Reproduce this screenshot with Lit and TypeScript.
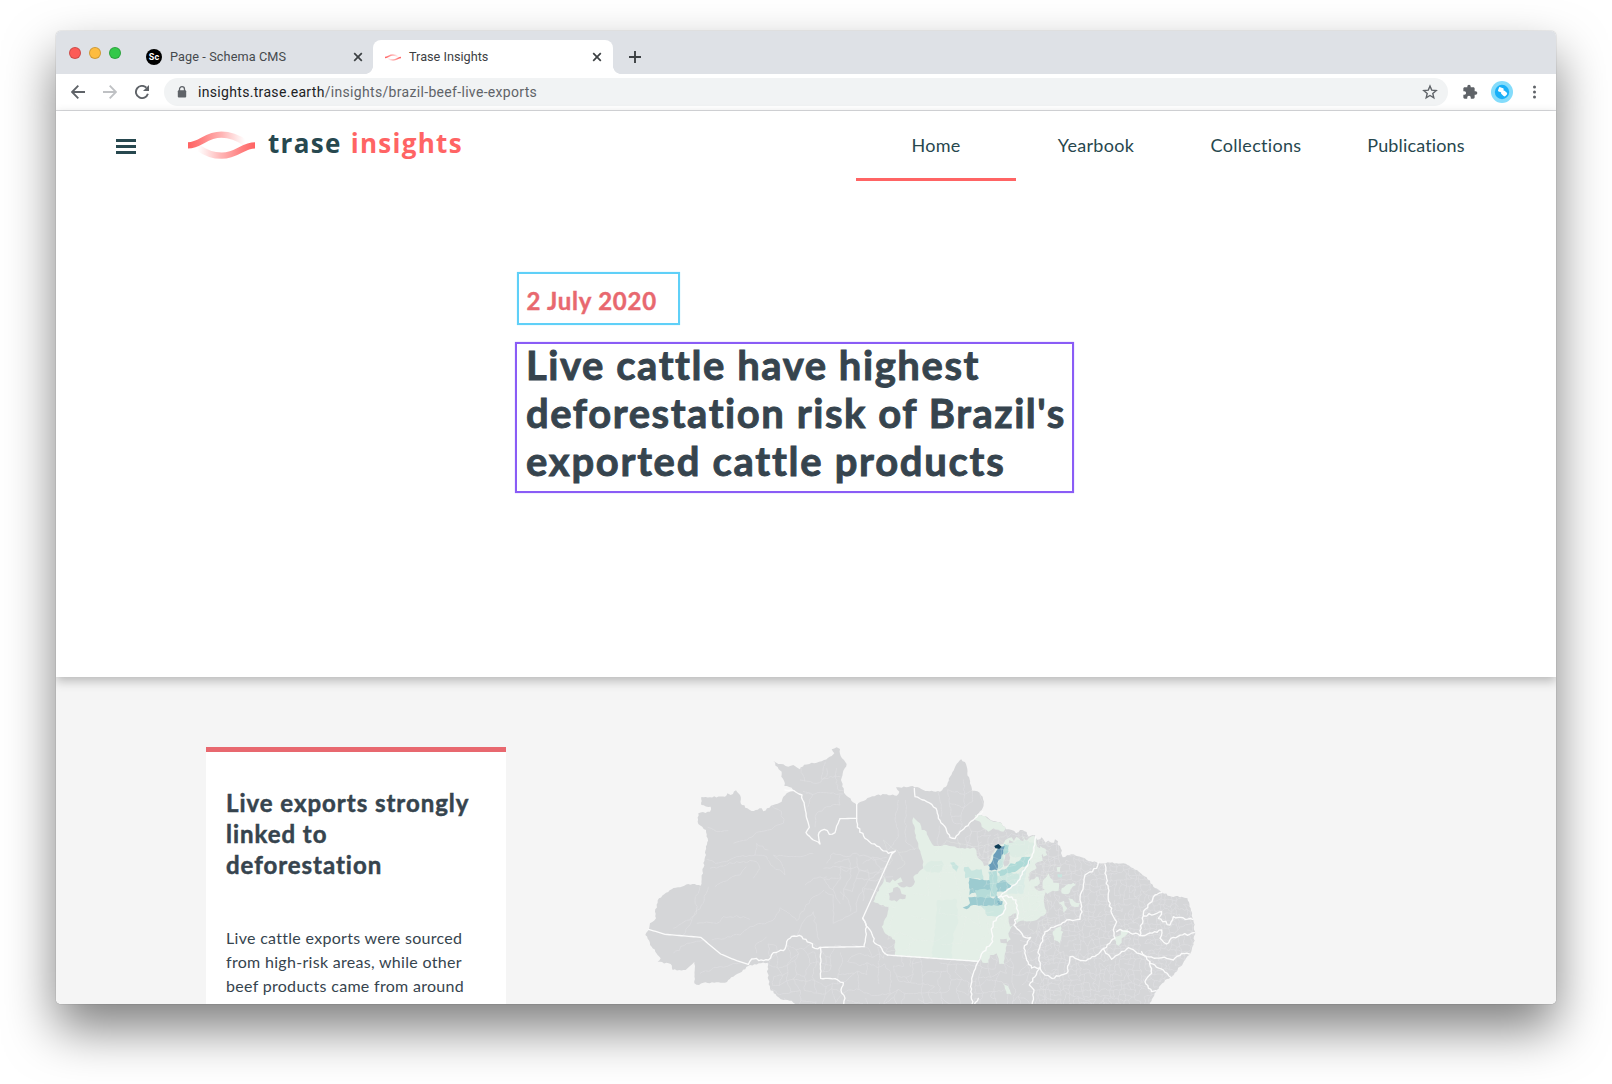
import { LitElement, html, svg, css } from "lit";
import { customElement } from "lit/decorators.js";

/* ---------- map geometry ---------- */

// Small deterministic generator so that coastlines are always the same.
function rng(seed: number) {
  let s = seed;
  return () => {
    s = (s * 1664525 + 1013904223) % 4294967296;
    return s / 4294967296;
  };
}

function parse(src: string, dx = 0): number[][] {
  return src.trim().split(/\s+/).map((p) => {
    const [x, y] = p.split(",").map(Number);
    return [x + dx, y];
  });
}

// Breaks each long segment into short ones with a small sideways offset.
function rough(pts: number[][], amp: number, step = 9, seed = 7): string {
  const r = rng(seed + Math.round(pts[0][0]));
  const out: string[] = [];
  pts.forEach((p, i) => {
    out.push(`${p[0]} ${p[1]}`);
    const q = pts[i + 1];
    if (!q) return;
    const dx = q[0] - p[0];
    const dy = q[1] - p[1];
    const len = Math.hypot(dx, dy);
    const n = Math.floor(len / step);
    for (let k = 1; k < n; k++) {
      const o = (r() - 0.5) * 2 * amp;
      out.push(
        `${(p[0] + (dx * k) / n - (dy / len) * o).toFixed(1)} ${(p[1] + (dy * k) / n + (dx / len) * o).toFixed(1)}`
      );
    }
  });
  return "M" + out.join("L");
}

const MID = 660;
const EAST = 1080;

const LAND = [
  ...parse(`16,585 26,570 30,550 48,535 45,515 57,475 95,448 145,432 170,435 182,437`),
  ...parse(`203,295 198,270 175,252 175,220 210,215 212,200 184,195 184,171 255,170 262,160 272,165 288,151
    300,165 302,190 322,205 335,213 365,205 370,214 400,195 425,185 430,170 440,160 465,152 455,143 433,138
    432,122 424,110 425,95 416,88 400,63 415,72 430,73 445,80 460,75 480,88 492,74 515,68 530,68 552,60 575,48 583,40 575,28 590,22 600,27 602,48 612,60 620,72
    610,92 603,120 612,158 645,190 650,195 670,183 690,172 710,165 740,163 770,167 778,155 768,142 785,143 818,138 850,150`),
  ...parse(`190,150 215,152 240,155 258,140 270,110 284,84 300,60 304,58 318,72 322,100 330,130 336,152 352,154 368,170 372,185 365,210 350,225
    375,228 400,243 425,250 438,268 455,270 468,280 480,270 500,276 506,290 525,286 533,300 545,292 556,308 565,302 582,308 585,298 594,304 594,316 600,318`, MID),
  ...parse(`182,325 188,352 215,343 240,350 260,360 295,370 330,368 370,370 400,385 440,412 460,440 487,458 515,470 545,470 562,475 572,505
    580,540 585,575 580,615 568,645 540,680 512,712 495,720 470,750 445,800`, EAST),
  ...parse(`470,800 455,782 430,780 410,768 390,745 383,700 383,668 330,675 300,698 280,710 255,728 190,728 177,735 163,730 163,665
    150,678 137,690 98,690 92,672 53,665 62,655 35,620 16,585`),
];

const BORDERS: [string, number, number][] = [
  ["26,568 75,583 182,592 242,642 290,662 325,673", 0, 0],
  ["325,673 335,657 385,660 400,638 430,632 440,605 455,589 485,589 510,608 525,625 540,622", 0, 3],
  ["540,622 672,620", 0, 0],
  ["672,620 680,560 668,535", 0, 2],
  ["668,535 755,342", 0, 0],
  ["755,342 766,333 745,340 710,318 675,295 652,262 650,235", 0, 3],
  ["650,235 650,190", 0, 0],
  ["648,235 600,236", 0, 0],
  ["600,236 590,258 585,278 568,283 562,272 553,268 543,272 535,285 537,300 540,312 520,300 498,278 508,262 500,235 495,205 488,180 486,165 462,152 435,150", 0, 2],
  ["542,622 542,715 585,716", 0, 1],
  ["585,716 610,728 603,750 615,775 606,800", 0, 2],
  ["668,535 690,570 705,610 725,625 742,645", 0, 2.5],
  ["742,645 1015,664", 0, 0],
  ["163,145 165,170 200,185 228,205 235,235 258,265 270,292 285,296 300,275 345,235 368,215", MID, 2],
  ["527,290 522,330 505,370 470,430 415,472", MID, 2],
  ["427,470 440,490 430,520 400,545 395,575 398,605 370,635 355,664 340,700 332,740 338,800", MID, 2.5],
  ["338,800 355,775", MID, 2],
  ["420,470 440,466 468,480 475,520 462,555 490,590 512,592 492,625 500,660 515,684 540,684", MID, 3],
  ["120,684 88,735 102,750 97,800", EAST, 2.5],
  ["120,684 116,630 135,575 200,540 240,538 245,500 240,480 250,440 255,405 290,385 295,367", EAST, 3],
  ["120,684 130,700 155,715 200,700 210,650 250,662 290,645 345,595 340,570 350,545 335,520 325,460 315,400 315,373", EAST, 3],
  ["350,575 360,568 385,575 420,587 430,520 465,465 485,458", EAST, 3],
  ["432,528 485,515 475,535 510,555 520,530 578,538", EAST, 3],
  ["420,587 485,570 480,595 500,612 520,592 583,578", EAST, 3],
  ["310,625 335,658 385,623 440,650 500,655 520,660 545,640 568,642", EAST, 2.5],
  ["425,635 450,670 490,690 512,712", EAST, 2],
  ["450,665 455,700 435,725 455,755 468,752", EAST, 2.5],
];

const GREY = "#d5d6d8";
const PALE = "#e4efe7";

const AREAS: [string, string, number][] = [
  [PALE, `160,232 180,250 185,270 200,275 205,290 222,318 260,315 300,325 345,325 350,345 362,360 372,378 385,375 395,345 412,320
    430,312 436,300 455,292 462,304 470,290 484,300 490,290 500,302 512,290 527,290 532,320 560,330 545,345 548,362 525,372 530,385 508,400 512,415 535,410 540,430 522,440 535,452 560,450 552,470 558,520 530,540 475,545
    455,560 445,580 452,598 440,608 435,640 432,672 418,672 410,640 390,645 385,668 368,668 362,650 355,664 105,647 105,600 75,580 65,560 80,530 85,500
    60,495 40,485 75,412 78,425 90,428 98,418 105,424 122,412 128,425 112,430 125,442 155,440 165,425 160,410 190,385 190,365 182,340 175,320 170,300 165,265 158,250`, MID],
  [PALE, `345,225 375,225 390,240 425,250 438,265 430,275 400,265 385,275 365,260 360,245 345,240`, MID],
  [GREY, `86,460 98,456 100,444 112,440 120,446 125,462 138,465 136,476 120,476 110,485 88,480`, MID],
  [GREY, `420,598 440,596 442,610 422,608`, MID],
  [GREY, `505,410 530,400 528,412 508,425`, MID],
  [GREY, `448,300 462,306 458,318 446,312`, MID],
  [GREY, `480,298 492,294 490,306 478,308`, MID],
  [GREY, `445,530 468,520 468,555 450,560`, MID],
  [PALE, `550,420 566,400 580,428 597,430 596,452 578,452 562,462 548,445`, MID],
  [PALE, `540,318 556,326 562,345 550,350`, MID],
  ["#c8e5df", `592,402 606,402 606,412 594,412`, MID],
  [PALE, `158,575 168,565 182,558 182,572 190,575 180,610 162,600`, EAST],
  [PALE, `345,590 362,585 362,570 383,568 385,577 365,595 365,608 355,617 348,612`, EAST],
  [PALE, `185,445 198,436 220,428 228,435 212,448 205,462 185,460`, EAST],
  [PALE, `205,475 218,478 228,488 240,490 235,500 215,498`, EAST],
  [PALE, `175,488 192,482 194,496 202,505 190,518 188,500`, EAST],
  [PALE, `170,382 182,380 180,395 172,395`, EAST],
  [PALE, `8,730 24,738 35,764 20,762`, EAST],
  ["#ddece4", `190,380 215,362 245,362 252,375 240,398 200,395`, MID],
  ["#dfede5", `232,480 290,478 295,540 280,580 275,660 215,653 222,600 228,540`, MID],
  ["#ddece4", `440,310 480,300 525,310 515,340 490,350 460,352 445,340`, MID],
  ["#dbece6", `440,430 475,400 500,375 498,400 490,460 440,462`, MID],
  ["#c8e5df", `270,368 282,366 296,380 290,395 278,385`, MID],
  ["#c8e5df", `312,382 325,380 335,392 365,388 370,418 328,412 315,415`, MID],
  ["#cde7e0", `412,408 445,400 470,400 485,415 465,432 440,428 425,420 412,430`, MID],
  ["#cde7e0", `362,498 432,492 435,510 420,532 395,528 382,528 375,510`, MID],
  ["#c8e5df", `418,340 432,330 428,380 412,388`, MID],
  ["#aedad7", `432,312 447,315 445,335 432,345`, MID],
  ["#b5dcd9", `385,395 410,392 414,430 408,470 392,470 388,420`, MID],
  ["#aedad7", `412,395 440,385 452,370 465,372 485,352 512,350 508,372 480,385 465,396 440,400 420,408`, MID],
  ["#9ccbd0", `328,413 345,417 388,420 390,455 345,458 328,465`, MID],
  ["#b5dcd9", `345,450 390,448 393,476 348,474`, MID],
  ["#9ccbd0", `308,503 330,490 325,472 345,470 400,476 410,466 428,490 415,497 380,498 340,495 320,508`, MID],
  ["#9ccbd0", `410,430 430,420 455,438 430,455 410,455`, MID],
  ["#7fb6c4", `412,482 428,484 426,495 414,493`, MID],
  [GREY, `436,342 450,336 448,370 434,380 430,365`, MID],
  ["#6a9db9", `424,320 434,318 430,340 412,370 411,391 388,390 385,375 397,362 400,345 412,328`, MID],
  ["#0d3c56", `403,318 415,312 425,320 418,328 406,325`, MID],
];

// Municipality outlines: an irregular honeycomb of short strokes.
function mesh(x0: number, y0: number, x1: number, y1: number, cell: number, keep: number, seed: number) {
  const r = rng(seed);
  const cols = Math.ceil((x1 - x0) / cell);
  const rows = Math.ceil((y1 - y0) / cell);
  const node: number[][][] = [];
  for (let j = 0; j <= rows; j++) {
    node.push([]);
    for (let i = 0; i <= cols; i++) {
      node[j].push([
        Math.round(x0 + (i + (r() - 0.5) * 0.9) * cell),
        Math.round(y0 + (j + (r() - 0.5) * 0.9) * cell),
      ]);
    }
  }
  let d = "";
  for (let j = 0; j < rows; j++) {
    for (let i = 0; i < cols; i++) {
      if (r() < keep) d += rough([node[j][i], node[j][i + 1]], 3, 7, i + j * 31);
      if (r() < keep) d += rough([node[j][i], node[j + 1][i]], 3, 7, i * 17 + j);
    }
  }
  return d;
}

// Long municipal limits of the sparsely divided west.
const LIMITS: string[] = [
  "200,358 225,370 260,365 290,350 345,345 350,310 385,330",
  "345,345 380,350 400,380 435,405 425,370 400,345 470,350 520,340",
  "210,385 260,375 290,365 350,365 360,385 340,415",
  "180,440 165,480 170,520 130,585",
  "205,440 190,490 150,540 100,565",
  "225,440 250,425 300,405 320,380",
  "170,550 230,550 250,530 310,530 330,538",
  "215,600 300,585 330,560 400,540 420,503 470,542 510,480 552,450",
  "280,310 320,300 360,275 395,268 430,250 425,215 395,197",
  "203,262 230,275 265,272",
  "470,590 490,545 520,515 530,570 538,600",
  "580,550 650,515 652,480 680,430 740,375",
  "580,550 580,465 555,455",
  "600,455 625,480 632,515",
  "380,590 345,620 350,640",
  "550,385 590,380 620,395 650,380 690,400 735,395",
  "560,370 580,340 620,350 650,340 700,360 740,352",
  "495,435 520,415 560,410",
  "525,262 530,220 560,200 600,195 600,165",
  "480,120 530,130 560,110 560,85",
  "497,160 560,158 610,162",
  "775,180 765,240 775,290 745,330",
  "797,180 797,305",
  "797,305 825,330",
  "100,640 140,610 190,600",
  "180,700 240,680 300,668",
];

const MESHES = [
  mesh(560, 360, 760, 460, 30, 0.5, 5),
  mesh(480, 70, 620, 160, 40, 0.45, 9),
  mesh(390, 620, 1000, 800, 27, 0.62, 21),
  mesh(1000, 560, 1220, 800, 24, 0.65, 3),
  mesh(1200, 300, 1680, 800, 15, 0.75, 33),
  mesh(900, 130, 1040, 300, 32, 0.5, 14),
  mesh(980, 270, 1200, 380, 17, 0.6, 27),
];

const PALE_MESH = mesh(740, 320, 1040, 660, 44, 0.5, 8) + mesh(1040, 290, 1220, 560, 22, 0.65, 4);

@customElement("brazil-map")
export class BrazilMap extends LitElement {
  static styles = css`
    :host { display: block; }
    svg { display: block; width: 560px; height: 264px; }
    .land { fill: #d5d6d8; }
    .mesh { fill: none; stroke: #dfe0e2; stroke-width: 1.9; }
    .pale { fill: none; stroke: #eef4ee; stroke-width: 1.6; opacity: 0.45; }
    .border { fill: none; stroke: #fbfbfb; stroke-width: 4; stroke-linejoin: round; stroke-linecap: round; }
  `;
  render() {
    const land = rough(LAND, 2.4, 6) + "Z";
    return html`<svg viewBox="0 0 1680 792" aria-hidden="true">
      <defs><clipPath id="land"><path d=${land}></path></clipPath></defs>
      <path class="land" d=${land}></path>
      <g clip-path="url(#land)">
        ${MESHES.map((d) => svg`<path class="mesh" d=${d}></path>`)}
        ${LIMITS.map((p) => svg`<path class="mesh" d=${rough(parse(p), 4, 9)}></path>`)}
        ${AREAS.map(([fill, p, dx], i) => {
          const pts = parse(p, dx);
          pts.push(pts[0]);
          return svg`<path fill=${fill} d=${rough(pts, 2.6, 7, i) + "Z"}></path>`;
        })}
        <path class="pale" d=${PALE_MESH}></path>
      </g>
      ${BORDERS.map(([p, dx, amp]) => svg`<path class="border" d=${rough(parse(p, dx), amp * 1.2, 7)}></path>`)}
    </svg>`;
  }
}

/* ---------- logo ---------- */

@customElement("trase-mark")
export class TraseMark extends LitElement {
  static styles = css`
    :host { display: block; }
    svg { display: block; width: 100%; height: 100%; overflow: visible; }
    path { fill: none; stroke-width: 19; }
    .a { stroke: url(#a); }
    .b { stroke: url(#b); }
  `;
  render() {
    return html`<svg viewBox="0 0 201 84" aria-hidden="true">
      <defs>
        <linearGradient id="a" gradientUnits="userSpaceOnUse" x1="0" y1="0" x2="172" y2="0">
          <stop offset="0" stop-color="#ff6262"></stop>
          <stop offset=".25" stop-color="#ff7070" stop-opacity=".88"></stop>
          <stop offset=".6" stop-color="#ff7a7a" stop-opacity=".55"></stop>
          <stop offset="1" stop-color="#ff8c8c" stop-opacity="0"></stop>
        </linearGradient>
        <linearGradient id="b" gradientUnits="userSpaceOnUse" x1="201" y1="0" x2="29" y2="0">
          <stop offset="0" stop-color="#ff6262"></stop>
          <stop offset=".25" stop-color="#ff7070" stop-opacity=".88"></stop>
          <stop offset=".6" stop-color="#ff7a7a" stop-opacity=".55"></stop>
          <stop offset="1" stop-color="#ff8c8c" stop-opacity="0"></stop>
        </linearGradient>
      </defs>
      <path class="a" d="M0 43C38 43 52 11 100 11C130 11 150 20 172 36"></path>
      <path class="b" d="M201 43C163 43 149 74 101 74C71 74 51 65 29 49"></path>
    </svg>`;
  }
}

const close = svg`<path d="M1.2 1.2L8.8 8.8M8.8 1.2L1.2 8.8" fill="none" stroke="#3c4043" stroke-width="1.7"></path>`;

@customElement("app-root")
export class AppRoot extends LitElement {
  static styles = css`
    :host { display: block; width: 1612px; height: 1084px; overflow: hidden; background: #fff; }
    * { box-sizing: border-box; }
    svg { display: block; flex: none; }
    .desk { height: 100%; padding: 31px 56px 80px; }
    .window {
      width: 1500px; height: 973px; border-radius: 5px;
      box-shadow: 0 0 1px rgba(0, 0, 0, 0.55), 0 25px 50px rgba(0, 0, 0, 0.5);
    }
    .clip { height: 100%; overflow: hidden; border-radius: 5px; display: flex; flex-direction: column; background: #fff; }

    .tabs { height: 43px; flex: none; background: #dee1e6; display: flex; padding-left: 13px; font: 12.7px/16px Roboto, sans-serif; color: #45494d; }
    .lights { display: flex; gap: 8px; margin-top: 16px; width: 76px; }
    .light { width: 12px; height: 12px; border-radius: 50%; border: 0.5px solid rgba(0, 0, 0, 0.18); }
    .red { background: #fc5b57; }
    .amber { background: #fdbc40; }
    .green { background: #34c84a; }
    .tab { margin-top: 9px; height: 34px; width: 240px; display: flex; align-items: center; padding: 0 11px 0 12px; }
    .tab.idle { width: 228px; padding: 0 10px 0 1px; letter-spacing: 0.1px; }
    .tab.active { background: #fff; border-radius: 8px 8px 0 0; position: relative; color: #3c4043; }
    .tab.active::before, .tab.active::after { content: ""; position: absolute; bottom: 0; width: 8px; height: 8px; }
    .tab.active::before { left: -8px; background: radial-gradient(circle at 0 0, transparent 7.6px, #fff 8.2px); }
    .tab.active::after { right: -8px; background: radial-gradient(circle at 100% 0, transparent 7.6px, #fff 8.2px); }
    .name { flex: 1; padding-left: 8px; white-space: nowrap; }
    .sc { width: 16px; height: 16px; border-radius: 50%; background: #000; color: #fff; font: 700 9px/16px Roboto, sans-serif; text-align: center; }
    .fav { width: 16px; height: 7px; }
    .plus { margin: 20px 0 0 16px; }

    .bar { height: 37px; flex: none; display: flex; align-items: center; padding: 0 16px 1px 15px; border-bottom: 1px solid #d9dadd; background: #fff; }
    .nav { display: flex; gap: 18px; width: 93px; }
    .omni { width: 1284px; height: 28px; border-radius: 14px; background: #f1f3f4; display: flex; align-items: center; padding: 0 10px 0 13px; font: 14px/20px Roboto, sans-serif; letter-spacing: 0.32px; color: #5f6368; }
    .url { flex: 1; padding-left: 11px; white-space: nowrap; }
    .host { color: #202124; }
    .tools { display: flex; align-items: center; flex: 1; }
    .puzzle { margin-left: 14px; }
    .avatar { margin-left: 13px; }
    .dots { margin-left: 19px; }

    .hero { height: 566px; flex: none; background: #fff; position: relative; z-index: 1; box-shadow: 0 4px 10px rgba(0, 0, 0, 0.25); font-family: Lato, sans-serif; }
    .head { height: 70px; display: flex; padding: 0 60px; }
    .burger { display: flex; flex-direction: column; gap: 3.5px; margin: 28px 52px 0 0; }
    .burger i { width: 20px; height: 2.5px; background: #27484f; }
    .mark { width: 67px; height: 28px; margin-top: 20px; }
    .brand { margin: 14px 0 0 13px; font: 700 26px/36px "Open Sans", sans-serif; letter-spacing: 1.3px; color: #27484f; white-space: nowrap; word-spacing: 1px; }
    .brand span { color: #ff6464; }
    .menu { display: flex; margin-left: auto; }
    .item { width: 160px; height: 70px; padding-top: 22px; text-align: center; font-size: 18px; line-height: 24px; letter-spacing: 0.3px; color: #27474e; }
    .item:last-child { letter-spacing: 0.15px; }
    .item.on { border-bottom: 3px solid #ff6464; }
    .intro { padding: 91px 0 0 459px; display: flex; flex-direction: column; align-items: flex-start; }
    .date { width: 163px; height: 53px; margin-left: 1.5px; border: 2px solid #5fd0f8; box-shadow: 0 0 1px #a6e4fb; padding: 12px 0 0 8px; font-weight: 700; font-size: 24px; line-height: 30px; letter-spacing: 0.75px; color: #e8686f; white-space: nowrap; -webkit-text-stroke: 0.4px #e8686f; }
    h1 { margin: 17px 0 0; width: 559px; height: 151px; border: 2px solid #8a5cf6; box-shadow: 0 0 1px #b9a0fa; padding: 0 0 0 9px; font-weight: 700; font-size: 40px; letter-spacing: 1.55px; color: #36444e; -webkit-text-stroke: 0.9px #36444e; white-space: nowrap; }
    h1 span { display: block; height: 48px; line-height: 48px; }
    h1 span:first-child { margin-top: -3px; }
    h1 span:last-child { letter-spacing: 1.72px; }

    .story { flex: 1; min-height: 0; overflow: hidden; background: #f5f5f5; display: flex; align-items: flex-start; padding-left: 150px; font-family: Lato, sans-serif; color: #36444e; }
    .card { width: 300px; height: 340px; margin-top: 70px; border-top: 5px solid #e8686f; background: #fff; padding: 35px 20px 0; white-space: nowrap; }
    h2 { margin: 0; font-weight: 700; font-size: 24px; line-height: 31px; letter-spacing: 0.97px; -webkit-text-stroke: 0.5px #36444e; }
    p { margin: 46px 0 0; font-size: 16px; line-height: 24px; letter-spacing: 0.3px; }
    .map { margin: 63px 0 0 134px; }
  `;

  render() {
    return html`
      <div class="desk"><div class="window"><div class="clip">
        <div class="tabs">
          <div class="lights"><div class="light red"></div><div class="light amber"></div><div class="light green"></div></div>
          <div class="tab idle">
            <div class="sc">Sc</div><div class="name">Page - Schema CMS</div>
            <svg width="10" height="10" viewBox="0 0 10 10">${close}</svg>
          </div>
          <div class="tab active">
            <trase-mark class="fav"></trase-mark><div class="name">Trase Insights</div>
            <svg width="10" height="10" viewBox="0 0 10 10">${close}</svg>
          </div>
          <svg class="plus" width="12" height="12" viewBox="0 0 12 12"><path d="M6 0V12M0 6H12" stroke="#3c4043" stroke-width="1.9"></path></svg>
        </div>
        <div class="bar">
          <div class="nav">
            <svg width="14" height="14" viewBox="0 0 14 14"><path d="M14 7H1.5M7.3 .7L1 7L7.3 13.3" fill="none" stroke="#5f6368" stroke-width="1.9"></path></svg>
            <svg width="14" height="14" viewBox="0 0 14 14"><path d="M0 7H12.5M6.7 .7L13 7L6.7 13.3" fill="none" stroke="#bfc1c4" stroke-width="1.9"></path></svg>
            <svg width="14" height="14" viewBox="0 0 14 14"><path d="M11.4 2.7A6.1 6.1 0 1 0 12.9 8.7" fill="none" stroke="#5f6368" stroke-width="1.9"></path><path d="M14 0V6H8Z" fill="#5f6368"></path></svg>
          </div>
          <div class="omni">
            <svg width="10" height="12" viewBox="0 0 10 12"><path d="M2.5 5V3.2a2.5 2.5 0 0 1 5 0V5" fill="none" stroke="#5f6368" stroke-width="1.3"></path><rect x=".8" y="4.3" width="8.4" height="7.2" rx="1" fill="#5f6368"></rect></svg>
            <div class="url"><span class="host">insights.trase.earth</span>/insights/brazil-beef-live-exports</div>
            <svg width="16" height="16" viewBox="0 0 16 16"><path d="M8 2L9.7 6.1L14.2 6.5L10.8 9.4L11.8 13.8L8 11.5L4.2 13.8L5.2 9.4L1.8 6.5L6.3 6.1Z" fill="none" stroke="#5f6368" stroke-width="1.4"></path></svg>
          </div>
          <div class="tools">
            <svg class="puzzle" width="16" height="16" viewBox="0 0 24 24"><path fill="#5f6368" d="M20.5 11H19V7c0-1.1-.9-2-2-2h-4V3.5a2.5 2.5 0 0 0-5 0V5H4c-1.100 0-2 .9-2 2v3.800h1.500a2.700 2.700 0 0 1 0 5.400H2V20c0 1.100.9 2 2 2h3.800v-1.500a2.700 2.700 0 0 1 5.400 0V22H17c1.100 0 2-.9 2-2v-4h1.500a2.500 2.500 0 0 0 0-5z"></path></svg>
            <svg class="avatar" width="22" height="22" viewBox="0 0 22 22"><circle cx="11" cy="11" r="11" fill="#84dcfb"></circle><circle cx="11" cy="11" r="7.2" fill="#1ab0f8"></circle><rect x="7.300" y="6.600" width="5" height="4.600" rx="1" fill="#fff" transform="rotate(20 10 9)"></rect><rect x="10" y="10" width="5.800" height="4.600" rx="1.500" fill="#fff" transform="rotate(42 13 12.500)"></rect></svg>
            <svg class="dots" width="4" height="14" viewBox="0 0 4 14"><g fill="#5f6368"><circle cx="2.500" cy="2" r="1.500"></circle><circle cx="2.500" cy="7" r="1.500"></circle><circle cx="2.500" cy="12" r="1.500"></circle></g></svg>
          </div>
        </div>
        <div class="hero">
          <div class="head">
            <div class="burger"><i></i><i></i><i></i></div>
            <trase-mark class="mark"></trase-mark>
            <div class="brand">trase <span>insights</span></div>
            <div class="menu">
              <div class="item on">Home</div>
              <div class="item">Yearbook</div>
              <div class="item">Collections</div>
              <div class="item">Publications</div>
            </div>
          </div>
          <div class="intro">
            <div class="date">2 July 2020</div>
            <h1><span>Live cattle have highest</span><span>deforestation risk of Brazil's</span><span>exported cattle products</span></h1>
          </div>
        </div>
        <div class="story">
          <div class="card">
            <h2>Live exports strongly<br>linked to<br>deforestation</h2>
            <p>Live cattle exports were sourced<br>from high-risk areas, while other<br>beef products came from around<br>the country.</p>
          </div>
          <brazil-map class="map"></brazil-map>
        </div>
      </div></div></div>`;
  }
}
